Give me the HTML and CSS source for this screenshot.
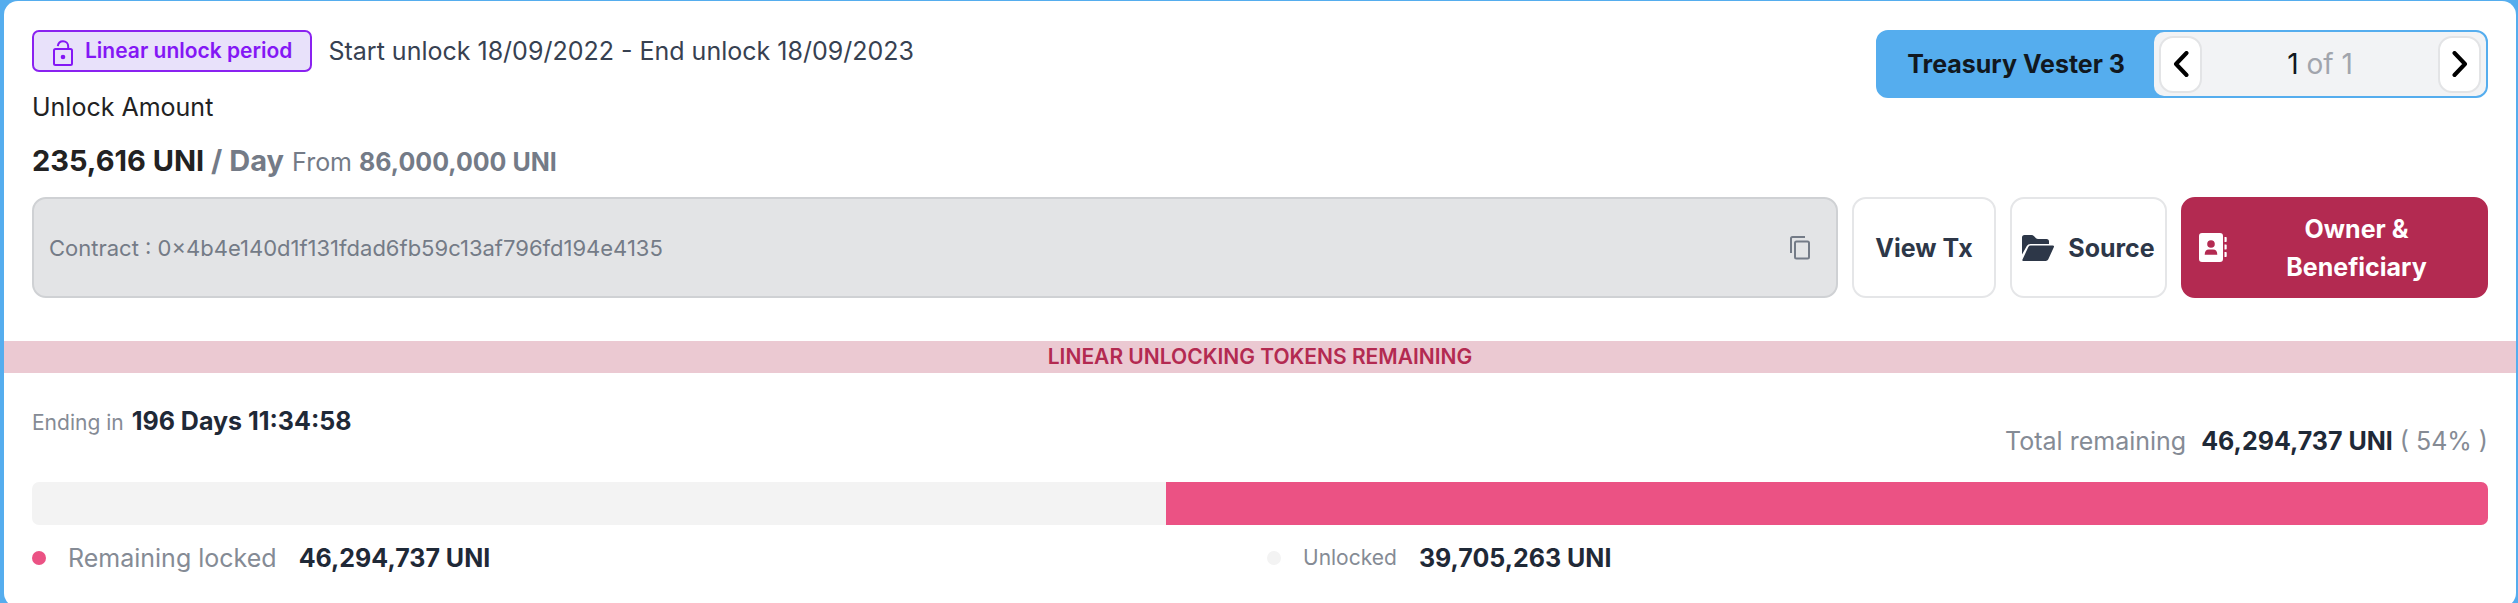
FILE: index.html
```
<!DOCTYPE html>
<html lang="en">
<head>
    <title>Treasury Vester 3</title>
    <meta charset="utf-8">
    <link rel="stylesheet" href="styles.css">
</head>
<body>

<div class="card">
    <div class="header">
        <div class="summary">
            <div class="period">
                <span class="badge">
                    <svg class="icon-lock" viewBox="0 0 20 26" fill="none" stroke="currentColor" stroke-width="2">
                        <rect x="1" y="9" width="18" height="16" rx="1.5"/>
                        <path d="M4.8 6.2C5.2 3.2 7.3 1.2 10 1.2c3 0 5.2 2.2 5.2 5.2V9"/>
                        <circle cx="10" cy="17" r="2.3" fill="currentColor" stroke="none"/>
                    </svg>
                    Linear unlock period
                </span>
                <span class="dates">Start unlock 18/09/2022 - End unlock 18/09/2023</span>
            </div>
            <div class="label">Unlock Amount</div>
            <div class="amount"><b>235,616 UNI <span class="muted">/ Day</span></b> <span class="from">From <b>86,000,000 UNI</b></span></div>
        </div>

        <div class="vester">
            <div class="vester-name">Treasury Vester 3</div>
            <div class="pager">
                <button class="page-button" aria-label="Previous">
                    <svg class="icon-arrow" viewBox="0 0 16 26"><path d="M13.5 2 3 13l10.5 11"/></svg>
                </button>
                <span class="page-count">1 <span class="page-total">of 1</span></span>
                <button class="page-button" aria-label="Next">
                    <svg class="icon-arrow" viewBox="0 0 16 26"><path d="M2.5 2 13 13 2.5 24"/></svg>
                </button>
            </div>
        </div>
    </div>

    <div class="actions">
        <div class="contract">
            <span>Contract : 0×4b4e140d1f131fdad6fb59c13af796fd194e4135</span>
            <button class="copy" aria-label="Copy address">
                <svg class="icon-copy" viewBox="0 0 20 24" fill="none" stroke="currentColor" stroke-width="2">
                    <path d="M1 17V2.5Q1 1 2.5 1H15"/>
                    <rect x="5" y="5.5" width="14" height="17" rx="1.5"/>
                </svg>
            </button>
        </div>
        <button class="button view">View Tx</button>
        <button class="button source">
            <svg class="icon-folder" viewBox="0 0 32 26" fill="currentColor">
                <path d="M0 2.5Q0 0 2.5 0h7q1.5 0 2.6 1.2L14 3.2q.8.7 2 .7h8.5q2.5 0 2.5 2.5V9H8.5Q6 9 4.8 11L0 19.5Z"/>
                <path d="M6.3 12Q7 10.6 8.6 10.6H30.8q1.8 0 1 1.7L26.3 24.3Q25.5 26 23.7 26H1.2q-1.3 0-.7-1.4Z"/>
            </svg>
            Source
        </button>
        <button class="button owner">
            <svg class="icon-contact" viewBox="0 0 28 29" fill="currentColor">
                <path fill-rule="evenodd" d="M3 0h18q3 0 3 3v23q0 3-3 3H3q-3 0-3-3V3q0-3 3-3Zm9 7.2a3.8 3.8 0 1 0 0 7.6 3.8 3.8 0 0 0 0-7.6ZM5.7 21.8h12.6q0-5.3-4.3-5.3h-4q-4.3 0-4.3 5.3Z"/>
                <path d="M25.5 4H27q.7 0 .7.7v3.6q0 .7-.7.7h-1.5ZM25.5 11.5H27q.7 0 .7.7v3.6q0 .7-.7.7h-1.5ZM25.5 19H27q.7 0 .7.7v3.6q0 .7-.7.7h-1.5Z"/>
            </svg>
            <span class="owner-text">Owner &amp; Beneficiary</span>
        </button>
    </div>

    <div class="banner">LINEAR UNLOCKING TOKENS REMAINING</div>

    <div class="stats">
        <div class="ending"><span class="small">Ending in</span> <b>196 Days 11:34:58</b></div>
        <div class="total">
            <span>Total remaining</span>
            <span><b>46,294,737 UNI</b> ( 54% )</span>
        </div>
    </div>

    <div class="bar">
        <div class="bar-locked" style="width: 53.84%"></div>
    </div>

    <div class="legend">
        <div class="legend-item">
            <span class="dot locked"></span>
            <span>Remaining locked</span>
            <b>46,294,737 UNI</b>
        </div>
        <div class="legend-item">
            <span class="dot"></span>
            <span class="small">Unlocked</span>
            <b>39,705,263 UNI</b>
        </div>
    </div>
</div>

</body>
</html>
```
FILE: styles.css
```
body {
    margin: 0px;
    padding: 1px 2px 0px 4px;
    background-color: #55adee;
    font: 25px/38px Inter, sans-serif;
    color: #1f2937;
    overflow: hidden;
}

button {
    margin: 0px;
    padding: 0px;
    font: inherit;
    color: inherit;
    cursor: pointer;
}

svg {
    display: block;
    flex: none;
}

b {
    font-weight: 700;
}

.card {
    background-color: white;
    border-radius: 14px;
    padding: 29px 0px 30px;
}

.header, .actions, .stats, .bar, .legend {
    margin-left: 28px;
    margin-right: 28px;
}

.header {
    display: flex;
    justify-content: space-between;
    align-items: flex-start;
}

.summary {
    display: flex;
    flex-direction: column;
    gap: 16px;
}

.period {
    display: flex;
    align-items: center;
    gap: 16px;
}

.badge {
    display: flex;
    align-items: center;
    gap: 12px;
    box-sizing: border-box;
    height: 42px;
    padding: 0px 18px 0px 19px;
    border: 2px solid #8a22f0;
    border-radius: 7px;
    background-color: #e8e1fa;
    color: #8417f5;
    font-size: 21px;
    font-weight: 600;
}

.icon-lock {
    width: 20px;
    height: 26px;
    margin-top: 4px;
}

.dates {
    color: #374151;
}

.label {
    color: #222;
}

.amount {
    font-size: 29px;
    color: #222;
}

.muted {
    color: #747b87;
}

.from {
    font-size: 25px;
    color: #747b87;
}

.vester {
    display: flex;
    box-sizing: border-box;
    height: 68px;
    border: 2px solid #55adee;
    border-radius: 12px;
    background-color: #55adee;
}

.vester-name {
    padding: 0px 29px;
    font-weight: 700;
    line-height: 64px;
    color: #111820;
}

.pager {
    display: flex;
    align-items: center;
    justify-content: space-between;
    box-sizing: border-box;
    width: 332px;
    padding: 0px 5px;
    border-radius: 10px;
    background-color: #f2f3f5;
}

.page-button {
    display: flex;
    align-items: center;
    justify-content: center;
    box-sizing: border-box;
    width: 43px;
    height: 57px;
    border: 2px solid #e3e4e6;
    border-radius: 14px;
    background-color: white;
    color: black;
}

.icon-arrow {
    width: 16px;
    height: 26px;
    fill: none;
    stroke: currentColor;
    stroke-width: 4;
    stroke-linecap: round;
    stroke-linejoin: round;
}

.page-count {
    font-size: 28px;
    color: #111820;
}

.page-total {
    color: #a1a5ad;
}

.actions {
    display: flex;
    gap: 14px;
    margin-top: 16px;
}

.contract {
    flex: 1;
    display: flex;
    align-items: center;
    justify-content: space-between;
    padding: 0px 26px 0px 15px;
    border: 2px solid #cfd1d4;
    border-radius: 14px;
    background-color: #e3e4e6;
    color: #747b87;
    font-size: 22px;
}

.copy {
    border: none;
    background: none;
}

.icon-copy {
    width: 20px;
    height: 24px;
}

.button {
    display: flex;
    align-items: center;
    justify-content: center;
    box-sizing: border-box;
    min-height: 101px;
    border: 2px solid #e5e6e8;
    border-radius: 14px;
    background-color: white;
    color: #2d3748;
    font-weight: 700;
}

.view {
    width: 144px;
}

.source {
    gap: 14px;
    width: 157px;
}

.owner {
    width: 307px;
    padding: 0px 16px;
    border-color: #b32a51;
    background-color: #b32a51;
    color: white;
}

.owner-text {
    flex: 1;
    padding: 0px 30px 0px 46px;
}

.icon-folder {
    width: 32px;
    height: 26px;
}

.icon-contact {
    width: 28px;
    height: 29px;
}

.banner {
    margin-top: 43px;
    background-color: #ebc9d2;
    color: #b32a51;
    font-size: 21px;
    font-weight: 600;
    line-height: 32px;
    text-align: center;
}

.stats {
    display: flex;
    justify-content: space-between;
    align-items: flex-start;
    padding: 29px 0px 22px;
    color: #858b95;
}

.small {
    font-size: 21px;
}

.ending {
    display: flex;
    align-items: baseline;
    gap: 8px;
}

.stats b, .legend b {
    color: #1f2937;
}

.total {
    display: flex;
    gap: 15px;
    padding-top: 20px;
}

.bar {
    display: flex;
    justify-content: flex-end;
    height: 43px;
    border-radius: 7px;
    background-color: #f3f3f3;
    overflow: hidden;
}

.bar-locked {
    background-color: #eb5284;
}

.legend {
    display: grid;
    grid-template-columns: 1fr 1fr;
    gap: 14px;
    padding-top: 14px;
    color: #858b95;
}

.legend-item {
    display: flex;
    align-items: center;
    gap: 22px;
}

.dot {
    width: 14px;
    height: 14px;
    border-radius: 50%;
    background-color: #f3f3f3;
}

.locked {
    background-color: #eb5284;
}
```
